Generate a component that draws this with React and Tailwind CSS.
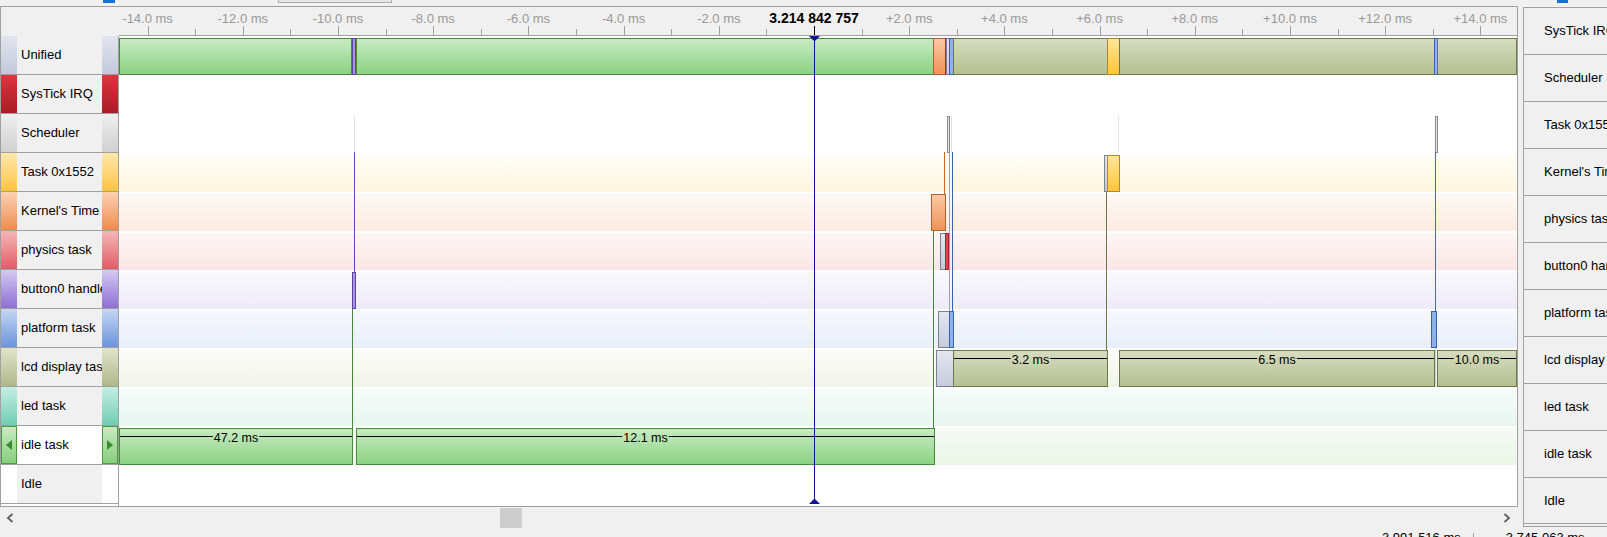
import React from "react";

// time axis: cursor at 0 ms sits at x=814, 2 ms per 95.2 px
const T0 = 814;
const PX = 47.6;
const rt = (i) => 36 + 39 * i;

const labelRows = [
    { name: "Unified", strip: "bg-linear-to-b from-[#e2e5ef] to-[#c3c9db]" },
    { name: "SysTick IRQ", strip: "bg-linear-to-b from-[#df3540] to-[#a81c26]" },
    { name: "Scheduler", strip: "bg-linear-to-b from-[#efefef] to-[#d0d0d0]" },
    { name: "Task 0x1552", strip: "bg-linear-to-b from-[#ffe8a8] to-[#ffc43c]" },
    { name: "Kernel's Time", strip: "bg-linear-to-b from-[#fbd1b3] to-[#ee8c4a]" },
    { name: "physics task", strip: "bg-linear-to-b from-[#f4b6b9] to-[#df5c66]" },
    { name: "button0 handler", strip: "bg-linear-to-b from-[#d4c9f1] to-[#8f6fd3]" },
    { name: "platform task", strip: "bg-linear-to-b from-[#c6d6f3] to-[#6c95db]" },
    { name: "lcd display task", strip: "bg-linear-to-b from-[#e1e4cc] to-[#afb888]" },
    { name: "led task", strip: "bg-linear-to-b from-[#c4eee2] to-[#6dcdb2]" },
];

const rightRows = [
    "SysTick IRQ",
    "Scheduler",
    "Task 0x1552",
    "Kernel's Time",
    "physics task",
    "button0 handler",
    "platform task",
    "lcd display task",
    "led task",
    "idle task",
    "Idle",
];

const bands = [
    [3, "#fffdf7", "#fff5e0"],
    [4, "#fef8f4", "#fcebe1"],
    [5, "#fef5f5", "#fbe6e6"],
    [6, "#f9f8fd", "#eeebf8"],
    [7, "#f6f8fd", "#e9eef9"],
    [8, "#fbfcf8", "#f1f4e9"],
    [9, "#f6fcfa", "#e9f6f0"],
    [10, "#f6fbf5", "#eaf6e7"],
];

const C = {
    green: ["url(#gGreen)", "#4a883e"],
    olive: ["url(#gOlive)", "#6c7848"],
    orange: ["url(#gOrange)", "#b2602c"],
    yellow: ["url(#gYellow)", "#b08a24"],
    lav: ["url(#gLav)", "#7a8096"],
    purple: ["#a892e2", "#5a44a8"],
    blue: ["#8fb0e8", "#3462b4"],
    red: ["#e8404c", "#b0202c"],
    gray: ["#e2e2e2", "#8a8a8a"],
};

function Bar({ x1, x2, i, c }) {
    const y = rt(i) + 2;
    return (
        <rect x={x1 + 0.5} y={y + 0.5} width={x2 - x1 - 1} height={36} fill={C[c][0]} stroke={C[c][1]} />
    );
}

function VLine({ x, a, b, color }) {
    return <line x1={x + 0.5} y1={a} x2={x + 0.5} y2={b} stroke={color} />;
}

function BarLabel({ x1, x2, i, text, w }) {
    const y = rt(i) + 2;
    const cx = (x1 + x2) / 2;
    const ly = y + 8.5;
    return (
        <g>
            <line x1={x1 + 1} y1={ly} x2={cx - w / 2 - 1} y2={ly} stroke="#000" />
            <line x1={cx + w / 2 + 1} y1={ly} x2={x2 - 1} y2={ly} stroke="#000" />
            <text x={cx} y={y + 14} textAnchor="middle" fontSize="12.5" fill="#000">
                {text}
            </text>
        </g>
    );
}

function Timeline() {
    const ticks = [];
    for (let k = -14; k <= 14; k++) ticks.push(k);

    return (
        <svg width="1398" height="499" className="block" fontFamily="'Liberation Sans', Arial, sans-serif">
            <defs>
                <linearGradient id="gGreen" x1="0" y1="0" x2="0" y2="1">
                    <stop offset="0" stopColor="#c8ebc2" />
                    <stop offset="1" stopColor="#8bd283" />
                </linearGradient>
                <linearGradient id="gOlive" x1="0" y1="0" x2="0" y2="1">
                    <stop offset="0" stopColor="#d7ddc0" />
                    <stop offset="1" stopColor="#b4bf91" />
                </linearGradient>
                <linearGradient id="gOrange" x1="0" y1="0" x2="0" y2="1">
                    <stop offset="0" stopColor="#fac9a6" />
                    <stop offset="1" stopColor="#ef9257" />
                </linearGradient>
                <linearGradient id="gYellow" x1="0" y1="0" x2="0" y2="1">
                    <stop offset="0" stopColor="#ffe699" />
                    <stop offset="1" stopColor="#ffc534" />
                </linearGradient>
                <linearGradient id="gLav" x1="0" y1="0" x2="0" y2="1">
                    <stop offset="0" stopColor="#e4e7f0" />
                    <stop offset="1" stopColor="#c6cbdc" />
                </linearGradient>
                {bands.map(([i, a, b]) => (
                    <linearGradient key={i} id={`band${i}`} x1="0" y1="0" x2="0" y2="1">
                        <stop offset="0" stopColor={a} />
                        <stop offset="1" stopColor={b} />
                    </linearGradient>
                ))}
            </defs>
            <g transform="translate(-119,-7)">
                {/* header / time ruler */}
                <rect x="119" y="7" width="1398" height="28" fill="#f0f0f0" />
                <line x1="119" y1="35.5" x2="1517" y2="35.5" stroke="#a0a0a0" />
                {ticks.map((k) => {
                    const x = Math.round(T0 + k * PX) + 0.5;
                    const major = k % 2 === 0;
                    return (
                        <line
                            key={k}
                            x1={x}
                            y1={major ? 26 : 29}
                            x2={x}
                            y2={35}
                            stroke={k === 0 ? "#000" : "#a0a0a0"}
                        />
                    );
                })}
                {ticks
                    .filter((k) => k % 2 === 0 && k !== 0)
                    .map((k) => (
                        <text key={k} x={T0 + k * PX} y="23" textAnchor="middle" fontSize="13" fill="#999">
                            {(k > 0 ? "+" : "") + k.toFixed(1) + " ms"}
                        </text>
                    ))}
                <text x={T0} y="23" textAnchor="middle" fontSize="14" fontWeight="bold" fill="#000">
                    3.214 842 757
                </text>

                {/* tinted row bands */}
                {bands.map(([i]) => (
                    <rect key={i} x="119" y={rt(i) + 2} width="1398" height="37" fill={`url(#band${i})`} />
                ))}

                {/* scheduler ticks */}
                <VLine x={354} a={116} b={152} color="#e2e2e2" />
                <VLine x={951} a={116} b={152} color="#e2e2e2" />
                <VLine x={1118} a={116} b={152} color="#e2e2e2" />
                <rect x="947.5" y="116.5" width="2" height="36" fill="#e4e4e4" stroke="#8a8a8a" />
                <rect x="1435.5" y="116.5" width="2" height="36" fill="#e4e4e4" stroke="#8a8a8a" />

                {/* connectors */}
                <VLine x={354} a={152} b={272} color="#6048b0" />
                <VLine x={352} a={308} b={428} color="#4a883e" />
                <VLine x={944} a={152} b={194} color="#d0682c" />
                <VLine x={949} a={152} b={311} color="#9aa0b0" />
                <VLine x={952} a={152} b={311} color="#3462b4" />
                <VLine x={933} a={230} b={428} color="#4a883e" />
                <VLine x={1106} a={191} b={350} color="#6c7848" />
                <VLine x={1435} a={152} b={311} color="#4a6aa8" />
                <VLine x={1435} a={347} b={387} color="#c8ccd4" />

                {/* Unified */}
                <Bar x1={119} x2={352} i={0} c="green" />
                <Bar x1={352} x2={356} i={0} c="purple" />
                <Bar x1={356} x2={934} i={0} c="green" />
                <Bar x1={933} x2={946} i={0} c="orange" />
                <rect x="945" y="38" width="1" height="37" fill="#c0202c" />
                <Bar x1={946} x2={950} i={0} c="lav" />
                <Bar x1={949} x2={954} i={0} c="blue" />
                <Bar x1={953} x2={1108} i={0} c="olive" />
                <Bar x1={1107} x2={1120} i={0} c="yellow" />
                <Bar x1={1119} x2={1435} i={0} c="olive" />
                <Bar x1={1434} x2={1438} i={0} c="blue" />
                <Bar x1={1437} x2={1517} i={0} c="olive" />

                {/* Task 0x1552 */}
                <Bar x1={1104} x2={1108} i={3} c="lav" />
                <Bar x1={1107} x2={1120} i={3} c="yellow" />

                {/* Kernel's Time */}
                <Bar x1={931} x2={946} i={4} c="orange" />

                {/* physics task */}
                <Bar x1={940} x2={946} i={5} c="lav" />
                <Bar x1={945} x2={949} i={5} c="red" />

                {/* button0 handler */}
                <Bar x1={352} x2={356} i={6} c="purple" />

                {/* platform task */}
                <Bar x1={938} x2={950} i={7} c="lav" />
                <Bar x1={949} x2={954} i={7} c="blue" />
                <Bar x1={1431} x2={1437} i={7} c="blue" />

                {/* lcd display task */}
                <Bar x1={936} x2={954} i={8} c="lav" />
                <Bar x1={953} x2={1108} i={8} c="olive" />
                <Bar x1={1119} x2={1435} i={8} c="olive" />
                <Bar x1={1437} x2={1517} i={8} c="olive" />
                <BarLabel x1={953} x2={1108} i={8} text="3.2 ms" w={37.5} />
                <BarLabel x1={1119} x2={1435} i={8} text="6.5 ms" w={37.5} />
                <BarLabel x1={1437} x2={1517} i={8} text="10.0 ms" w={44.5} />

                {/* idle task */}
                <Bar x1={119} x2={353} i={10} c="green" />
                <Bar x1={356} x2={935} i={10} c="green" />
                <BarLabel x1={119} x2={353} i={10} text="47.2 ms" w={44.5} />
                <BarLabel x1={356} x2={935} i={10} text="12.1 ms" w={44.5} />

                {/* cursor */}
                <line x1={T0 + 0.5} y1="36" x2={T0 + 0.5} y2="503" stroke="#10109a" />
                <polygon points={`${T0 - 5},36 ${T0 + 6},36 ${T0 + 0.5},41.5`} fill="#10109a" />
                <polygon points={`${T0 - 5},504 ${T0 + 6},504 ${T0 + 0.5},498.5`} fill="#10109a" />
            </g>
        </svg>
    );
}

function Tri({ dir }) {
    return (
        <svg width="6" height="10" className="block">
            <path d={dir === "left" ? "M6 0 L0 5 L6 10 Z" : "M0 0 L6 5 L0 10 Z"} fill="#3a8a30" />
        </svg>
    );
}

function Chevron({ dir }) {
    return (
        <svg width="8" height="10" className="block">
            <polyline
                points={dir === "left" ? "6.5,1 2,5 6.5,9" : "1.5,1 6,5 1.5,9"}
                fill="none"
                stroke="#606060"
                strokeWidth="1.8"
            />
        </svg>
    );
}

export default function App() {
    return (
        <div className="w-[1607px] h-[537px] overflow-hidden bg-[#f0f0f0] flex flex-col font-['Liberation_Sans',Arial,sans-serif] text-[13px] text-black">
            {/* top strip */}
            <div className="h-[6px] flex items-start shrink-0">
                <div className="ml-[103px] w-[12px] h-[3px] bg-[#1470d6]" />
                <div className="ml-[163px] w-[114px] h-[3px] bg-[#e6e6e6] border-x border-b border-[#adadad]" />
                <div className="ml-[1165px] w-[11px] h-[3px] bg-[#1470d6]" />
            </div>

            <div className="flex items-start shrink-0">
                {/* main timeline panel */}
                <div className="w-[1518px] flex flex-col">
                    <div className="h-[501px] border border-[#a0a0a0] bg-white flex">
                        <div className="w-[118px] flex flex-col">
                            <div className="h-[29px] bg-[#f0f0f0]" />
                            <div className="flex-1 border-r border-[#a0a0a0] flex flex-col">
                                {labelRows.map((r) => (
                                    <div key={r.name} className="h-[39px] flex border-b border-[#a0a0a0]">
                                        <div className={`w-[16px] ${r.strip}`} />
                                        <div className="w-[85px] bg-[#f0f0f0] pl-[4px] flex items-center overflow-hidden whitespace-nowrap">
                                            {r.name}
                                        </div>
                                        <div className={`w-[16px] ${r.strip}`} />
                                    </div>
                                ))}
                                <div className="h-[39px] flex border-b border-[#a0a0a0]">
                                    <div className="w-[16px] bg-linear-to-b from-[#c8ebc2] to-[#86cf7d] border border-[#4e9a44] flex items-center justify-center">
                                        <Tri dir="left" />
                                    </div>
                                    <div className="w-[85px] bg-white pl-[4px] flex items-center whitespace-nowrap">
                                        idle task
                                    </div>
                                    <div className="w-[16px] bg-linear-to-b from-[#c8ebc2] to-[#86cf7d] border border-[#4e9a44] flex items-center justify-center">
                                        <Tri dir="right" />
                                    </div>
                                </div>
                                <div className="h-[39px] flex border-b border-[#a0a0a0]">
                                    <div className="w-[16px] bg-white" />
                                    <div className="w-[85px] bg-[#f0f0f0] pl-[4px] flex items-center whitespace-nowrap">
                                        Idle
                                    </div>
                                    <div className="w-[16px] bg-white" />
                                </div>
                            </div>
                        </div>
                        <Timeline />
                    </div>

                    {/* horizontal scroll bar */}
                    <div className="h-[21px] flex items-start">
                        <div className="ml-[6px] mt-[6px]">
                            <Chevron dir="left" />
                        </div>
                        <div className="ml-[486px] mt-px w-[22px] h-[20px] bg-[#cdcdcd]" />
                        <div className="ml-[981px] mt-[6px]">
                            <Chevron dir="right" />
                        </div>
                    </div>
                </div>

                {/* right list panel */}
                <div className="ml-[5px] mt-px w-[90px] shrink-0 border-t border-l border-b border-[#a0a0a0] flex flex-col pb-[2px]">
                    {rightRows.map((name, idx) => (
                        <div
                            key={name}
                            className={`${idx === rightRows.length - 1 ? "h-[46px]" : "h-[47px]"} border-b border-[#a0a0a0] pl-[20px] flex items-center whitespace-nowrap`}
                        >
                            {name}
                        </div>
                    ))}
                </div>
            </div>

            {/* status bar, mostly cut off */}
            <div className="flex-1 flex items-start pt-[2px] leading-[16px] whitespace-nowrap">
                <span className="ml-[1382px]">3.991 516 ms</span>
                <div className="ml-[12px] w-px h-[10px] mt-[3px] bg-[#a0a0a0]" />
                <span className="ml-[32px]">3.745 063 ms</span>
            </div>
        </div>
    );
}
